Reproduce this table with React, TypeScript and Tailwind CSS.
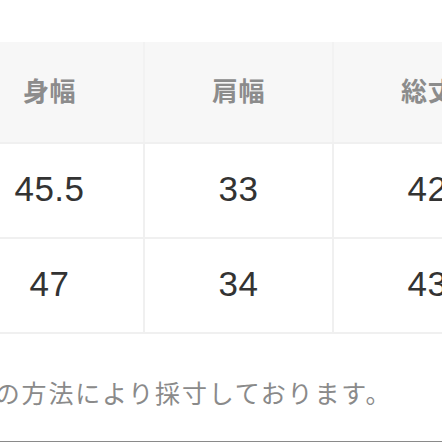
import React from "react";

const header = ["身幅", "肩幅", "総丈"];
const rows = [
  ["45.5", "33", "42"],
  ["47", "34", "43"],
];

export default function App() {
  return (
    <div
      className="w-[442px] h-[442px] overflow-hidden bg-white relative"
      style={{ fontFamily: '"Liberation Sans", Arial, "Noto Sans CJK JP", sans-serif' }}
    >
      <div className="h-[42px]" />
      <div className="ml-[-44px] w-[600px]">
        <div className="grid grid-cols-[187px_2px_187px_2px_187px] h-[100px] bg-[#f7f7f7]">
          {header.map((h, i) => (
            <React.Fragment key={h}>
              {i > 0 && <div className="bg-[#f2f2f2]" />}
              <div
                className="flex items-center justify-center pb-[5px] text-[26px] font-bold text-[#8c8c8c] tracking-[0.5px]"
                style={{ fontFamily: '"Noto Sans CJK JP", sans-serif' }}
              >
                {h}
              </div>
            </React.Fragment>
          ))}
        </div>
        {rows.map((r, ri) => (
          <div key={ri} className="grid grid-cols-[187px_2px_187px_2px_187px] h-[95px] border-t-2 border-[#f0f0f0]">
            {r.map((v, i) => (
              <React.Fragment key={i}>
                {i > 0 && <div className="bg-[#f0f0f0]" />}
                <div className="flex items-center justify-center pb-[3px] text-[35px] text-[#333] tracking-[0.5px]">
                  {v}
                </div>
              </React.Fragment>
            ))}
          </div>
        ))}
        <div className="h-[2px] bg-[#f0f0f0]" />
      </div>
      <div
        className="ml-[-32px] mt-[42px] whitespace-nowrap text-[25px] text-[#8a8a8a] tracking-[1.8px] leading-[32px]"
        style={{ fontFamily: '"Noto Sans CJK JP", sans-serif' }}
      >
        記の方法により採寸しております。
      </div>
      <div className="absolute left-0 right-0 bottom-0 h-[1px] bg-[#8a8a8a]" />
    </div>
  );
}
